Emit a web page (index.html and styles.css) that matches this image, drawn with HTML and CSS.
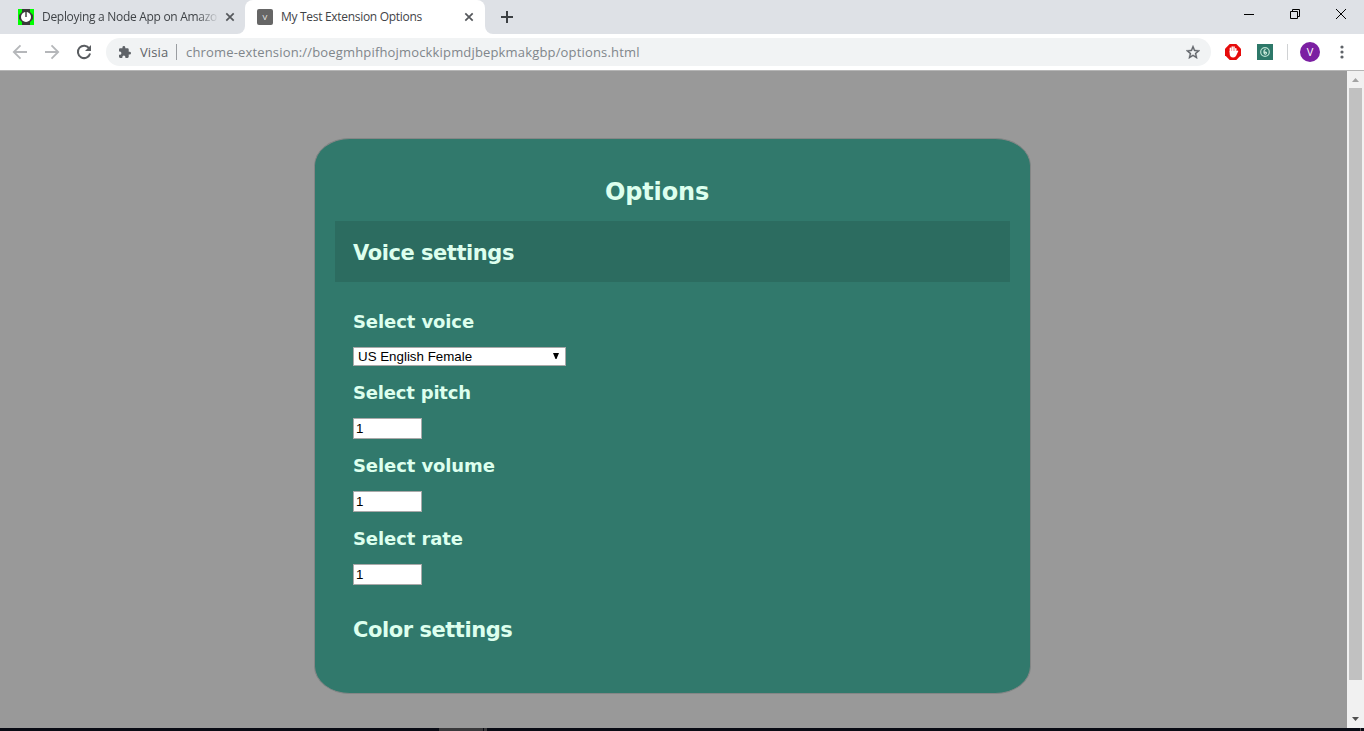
FILE: index.html
```html
<!DOCTYPE html>
<html lang="en">
<head>
<meta charset="utf-8">
<title>My Test Extension Options</title>
<link rel="stylesheet" href="styles.css">
</head>
<body>
<div class="browser">
  <div class="tabstrip">
    <div class="tab">
      <svg class="favicon" width="16" height="16" viewBox="0 0 16 16"><path fill="#0f0" d="M0 0h16v16H0z"/><path fill="#3a3a3a" d="M4 0h8v3l3 3v4l-3 3v3H4v-3L1 10V6l3-3z"/><circle cx="8" cy="8" r="5" fill="#fff"/><path stroke="#3a3a3a" stroke-width="1.4" d="M8 3v5"/></svg>
      <span class="tab-title faded">Deploying a Node App on Amazo</span>
      <svg class="close" width="10" height="10" viewBox="0 0 10 10"><path d="M1.3 1.3l7.4 7.4M8.700 1.3L1.300 8.700"/></svg>
    </div>
    <div class="tab active">
      <span class="favicon letter">V</span>
      <span class="tab-title">My Test Extension Options</span>
      <svg class="close" width="10" height="10" viewBox="0 0 10 10"><path d="M1.3 1.3l7.4 7.4M8.700 1.300L1.300 8.700"/></svg>
    </div>
    <div class="newtab-area">
      <svg width="12" height="12" viewBox="0 0 12 12"><path stroke="#3c4043" stroke-width="2" d="M6 0v12M0 6h12"/></svg>
    </div>
    <div class="window-buttons">
      <svg width="10" height="10" viewBox="0 0 10 10"><path stroke="#000" d="M0 5.500h10"/></svg>
      <svg width="10" height="10" viewBox="0 0 10 10"><path fill="none" stroke="#000" d="M.5 2.500h7v7h-7zM2.500 2.500v-2h7v7h-2"/></svg>
      <svg width="10" height="10" viewBox="0 0 10 10"><path stroke="#000" d="M0 0l10 10M10 0L0 10"/></svg>
    </div>
  </div>
  <div class="toolbar">
    <svg class="nav" width="16" height="16" viewBox="0 0 16 16"><path fill="none" stroke="#b5b7ba" stroke-width="1.800" d="M15 8H2M8.500 1.300L1.800 8l6.700 6.700"/></svg>
    <svg class="nav" width="16" height="16" viewBox="0 0 16 16"><path fill="none" stroke="#b5b7ba" stroke-width="1.800" d="M1 8h13M7.500 1.300L14.200 8l-6.700 6.700"/></svg>
    <svg class="nav" width="16" height="16" viewBox="0 0 16 16"><path fill="none" stroke="#5a5d61" stroke-width="2" d="M13.300 4.500A6.200 6.200 0 1 0 14.100 9.500"/><path fill="#5a5d61" d="M15 1v6H9z"/></svg>
    <div class="omnibox">
      <svg width="12" height="12" viewBox="2 1 21 21"><path fill="#5f6368" d="M20.500 11H19V7a2 2 0 0 0-2-2h-4V3.500a2.500 2.500 0 0 0-5 0V5H4a2 2 0 0 0-2 2v3.800h1.500a2.700 2.700 0 0 1 0 5.400H2V20a2 2 0 0 0 2 2h3.800v-1.500a2.700 2.700 0 0 1 5.400 0V22H17a2 2 0 0 0 2-2v-4h1.500a2.500 2.500 0 0 0 0-5z"/></svg>
      <span class="site">Visia</span>
      <span class="site-line"></span>
      <span class="url">chrome-extension://boegmhpifhojmockkipmdjbepkmakgbp/options.html</span>
      <svg class="star" width="14" height="14" viewBox="2 2 20 19"><path fill="#5f6368" stroke="#5f6368" stroke-width=".5" d="M22 9.240l-7.190-.62L12 2 9.190 8.630 2 9.240l5.460 4.730L5.820 21 12 17.270 18.180 21l-1.630-7.030L22 9.240zM12 15.400l-3.760 2.270 1-4.280-3.320-2.880 4.380-.38L12 6.100l1.710 4.040 4.380.38-3.320 2.880 1 4.280L12 15.400z"/></svg>
    </div>
    <div class="extensions">
      <svg width="16" height="16" viewBox="0 0 16 16"><path fill="#e60b0b" d="M4.700 0h6.600L16 4.700v6.600L11.300 16H4.700L0 11.300V4.700z"/><path fill="none" stroke="#fff" stroke-width="1.500" stroke-linecap="round" d="M5.400 8V4.300M7.200 8V2.900M9 8V3.100M10.800 8V4.700"/><path fill="#fff" d="M4.650 7h6.900l1.300-.6.500.7-2.100 4.400q-.9 2-3 2-3.600 0-3.600-4z"/></svg>
      <svg width="16" height="16" viewBox="0 0 16 16"><path fill="#2d7869" d="M0 0h16v16H0z"/><circle cx="8" cy="8" r="4.300" fill="none" stroke="#b9dfd0" stroke-width="1.200"/><path fill="none" stroke="#dff7e8" stroke-width="1.100" d="M8.600 5.300Q6.700 5.800 6.900 8q.1 2.200 1.300 2.200Q9.600 10.100 9.400 8.700 9 7.800 7.200 8.300"/></svg>
      <span class="tool-line"></span>
      <span class="avatar">V</span>
      <svg class="menu" width="4" height="14" viewBox="0 0 4 14"><g fill="#5f6368"><circle cx="2" cy="2" r="1.600"/><circle cx="2" cy="7" r="1.600"/><circle cx="2" cy="12" r="1.600"/></g></svg>
    </div>
  </div>
  <div class="viewport">
    <main class="page">
      <section class="card">
        <h1 class="title">Options</h1>
        <h2 class="section current">Voice settings</h2>
        <div class="fields">
          <h3 class="label">Select voice</h3>
          <div class="select"><span>US English Female</span><svg width="6" height="6" viewBox="0 0 6 6"><path d="M0 0h6L3.500 6h-1z"/></svg></div>
          <h3 class="label pitch">Select pitch</h3>
          <div class="number">1</div>
          <h3 class="label">Select volume</h3>
          <div class="number">1</div>
          <h3 class="label">Select rate</h3>
          <div class="number">1</div>
        </div>
        <h2 class="section color">Color settings</h2>
      </section>
    </main>
    <div class="scrollbar">
      <svg width="17" height="17" viewBox="0 0 17 17"><path fill="#a3a3a3" d="M5 11h7L8.500 7z"/></svg>
      <div class="thumb"></div>
      <svg width="17" height="17" viewBox="0 0 17 17"><path fill="#505050" d="M5 6h7L8.500 10z"/></svg>
    </div>
  </div>
  <div class="taskbar"><span class="task"></span><span class="task-edge"></span><span class="desktop-edge"></span></div>
</div>
</body>
</html>
```
FILE: styles.css
```css
* { box-sizing: border-box; }
body { margin: 0; background: #999; overflow: hidden; }
svg { display: block; flex: none; }
.browser { display: flex; flex-direction: column; width: 1364px; height: 731px; font-family: "Open Sans", "Noto Sans", sans-serif; }

.tabstrip { display: flex; height: 34px; background: #fff; }
.tab { display: flex; align-items: center; width: 245px; padding: 0 10px 0 18px; background: #dee1e6; border-radius: 0 0 8px 0; }
.tab.active { width: 240px; padding: 0 11px 0 12px; background: #fff; border-radius: 8px 8px 0 0; box-shadow: 0 -8px 0 8px #dee1e6; clip-path: inset(0); }
.favicon { flex: none; width: 16px; height: 16px; }
.letter { border-radius: 2px; background: #666; color: #eee; font-size: 8px; line-height: 16px; text-align: center; }
.tab-title { width: 178px; margin-left: 8px; color: #3f4347; font-size: 12px; line-height: 18px; white-space: nowrap; letter-spacing: -0.3px; }
.tab.active .tab-title { width: auto; }
.faded { -webkit-mask-image: linear-gradient(90deg, #000 155px, transparent 177px); mask-image: linear-gradient(90deg, #000 155px, transparent 177px); }
.close { margin-left: auto; stroke: #55585c; stroke-width: 1.7; }
.newtab-area { display: flex; align-items: center; width: 300px; padding-left: 16px; background: #dee1e6; border-radius: 0 0 0 8px; }
.window-buttons { display: flex; flex: 1; justify-content: flex-end; gap: 36px; padding: 9px 18px 0 0; background: #dee1e6; }

.toolbar { display: flex; align-items: center; height: 37px; padding-left: 12px; background: #fff; border-bottom: 1px solid #b5b5b5; }
.nav { margin-right: 16px; }
.omnibox { display: flex; align-items: center; width: 1105px; height: 28px; margin-left: -2px; padding: 0 11px 0 13px; border-radius: 14px; background: #f1f3f4; color: #5f6368; font-size: 13px; line-height: 20px; white-space: nowrap; }
.site { width: 28px; margin-left: 9px; letter-spacing: 0.1px; }
.site-line { width: 1px; height: 16px; margin: 0 9px 0 8px; background: #9a9da1; }
.url { color: #80868b; letter-spacing: 0.165px; }
.star { margin-left: auto; }
.extensions { display: flex; align-items: center; margin-left: 14px; }
.extensions svg + svg { margin-left: 16px; }
.tool-line { width: 1px; height: 16px; margin: 0 12px 0 14px; background: #d0d2d4; }
.avatar { width: 20px; height: 20px; border-radius: 50%; background: #7b1fa2; color: #fff; font-size: 11px; line-height: 20px; text-align: center; }
.menu { margin-left: 20px; }

.viewport { display: flex; height: 657px; }
.page { width: 1347px; padding: 67px 0 0 314px; background: #999; }
.card { width: 717px; height: 556px; padding: 34px 20px 0; border: 1px solid #848686; border-radius: 5%; background: #31796c; color: #dfe; font-family: Verdana, "DejaVu Sans", sans-serif; }
.title { height: 48px; margin: 0; padding: 0 0 0 270px; font-size: 24px; line-height: 38px; letter-spacing: -0.15px; white-space: nowrap; }
.section { height: 61px; margin: 0; padding: 0 18px; font-size: 21px; letter-spacing: -0.45px; }
.current { background: #2c6c60; line-height: 64px; }
.color { line-height: 62px; }
.fields { height: 317px; padding: 28px 18px 0; }
.label { height: 24px; margin: 0 0 13px; font-size: 18px; line-height: 24px; letter-spacing: -0.1px; white-space: nowrap; }
.pitch { letter-spacing: -0.2px; }
.select, .number { border: 1px solid #a9a9a9; background: #fff; color: #000; font-family: "Liberation Sans", Arial, sans-serif; font-size: 13.333px; }
.select { display: flex; align-items: center; justify-content: space-between; width: 213px; height: 19px; margin-bottom: 15px; padding: 0 6px 1px 4px; line-height: 17px; }
.number { width: 69px; height: 21px; margin-bottom: 15px; padding-left: 2px; line-height: 19px; }

.scrollbar { display: flex; flex-direction: column; width: 17px; background: #f1f1f1; }
.thumb { width: 13px; height: 592px; margin: 0 2px 31px; background: #c1c1c1; }
.taskbar { display: flex; height: 3px; background: #090b14; }
.task { width: 44px; margin-left: 439px; background: #39393b; }
.task-edge { width: 3px; margin-left: 1px; background: #39393b; }
.desktop-edge { width: 1px; margin: 0 3px 0 auto; background: #555; }
```
